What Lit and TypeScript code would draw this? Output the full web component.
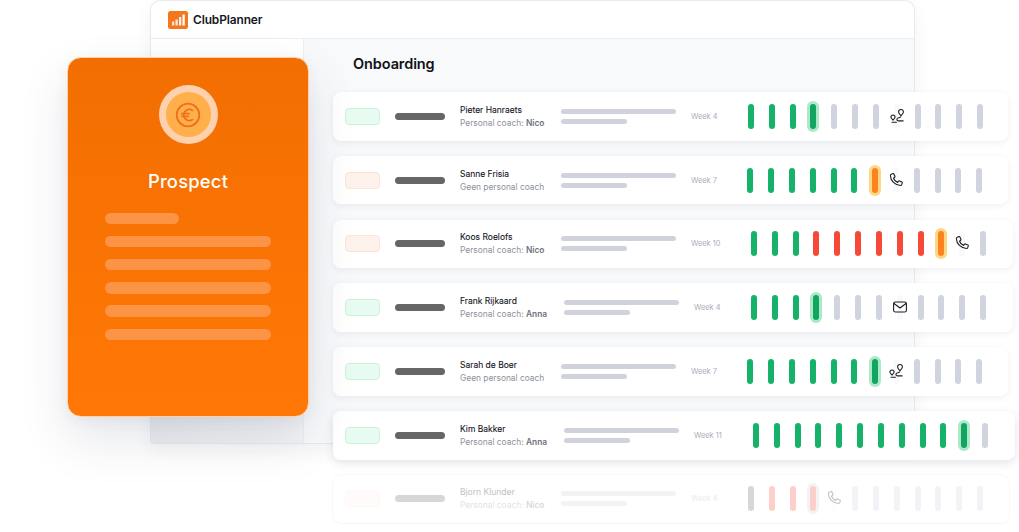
import { LitElement, html, css, svg } from "lit";
import { customElement } from "lit/decorators.js";

type Tone = "g" | "r" | "n" | "x" | "ag" | "ao" | "ar" | "route" | "phone" | "mail";
interface Row {
  name: string; sub: string; coach?: string; week: string; chip: "ok" | "warn";
  info: number; weekW: number; width: number; bars: Tone[]; faded?: boolean;
}
const rep = (t: Tone, n: number): Tone[] => Array(n).fill(t);
const rows: Row[] = [
  { name: "Pieter Hanraets", sub: "Personal coach: ", coach: "Nico", week: "Week 4", chip: "ok", info: 101, weekW: 57, width: 675,
    bars: [...rep("g", 3), "ag", ...rep("n", 3), "route", ...rep("n", 4)] },
  { name: "Sanne Frisia", sub: "Geen personal coach", week: "Week 7", chip: "warn", info: 101, weekW: 56.3, width: 675,
    bars: [...rep("g", 6), "ao", "phone", ...rep("n", 4)] },
  { name: "Koos Roelofs", sub: "Personal coach: ", coach: "Nico", week: "Week 10", chip: "warn", info: 101, weekW: 60, width: 680,
    bars: [...rep("g", 3), ...rep("r", 6), "ao", "phone", "n"] },
  { name: "Frank Rijkaard", sub: "Personal coach: ", coach: "Anna", week: "Week 4", chip: "ok", info: 104, weekW: 57, width: 680,
    bars: [...rep("g", 3), "ag", ...rep("n", 3), "mail", ...rep("n", 4)] },
  { name: "Sarah de Boer", sub: "Geen personal coach", week: "Week 7", chip: "ok", info: 101, weekW: 56.3, width: 675,
    bars: [...rep("g", 6), "ag", "route", ...rep("n", 4)] },
  { name: "Kim Bakker", sub: "Personal coach: ", coach: "Anna", week: "Week 11", chip: "ok", info: 104, weekW: 59, width: 682,
    bars: [...rep("g", 10), "ag", "n"] },
  { name: "Bjorn Klunder", sub: "Personal coach: ", coach: "Nico", week: "Week 4", chip: "warn", info: 101, weekW: 57, width: 676, faded: true,
    bars: ["x", "r", "r", "ar", "phone", ...rep("n", 7)] },
];

const icons: Record<string, unknown> = {
  route: svg`<path d="M12 1.500a2.400 2.400 0 0 1 2.400 2.400c0 1.500-1.500 2.700-2.400 3.700-.9-1-2.400-2.200-2.400-3.700A2.400 2.400 0 0 1 12 1.500Z"/><path d="M4 7a2.100 2.100 0 0 1 2.100 2.100c0 1.200-1.300 2.200-2.100 3-.8-.8-2.100-1.800-2.100-3A2.100 2.100 0 0 1 4 7Z"/><path d="M11.800 8.700c-.2.800-1 1-2 1.100-1.200.1-1.900.6-1.900 1.600s.7 1.500 1.800 1.500h4.400"/><path d="M3 14.200h4.400"/>`,
  phone: svg`<path d="M3.200 2.300 5 1.600c.4-.1.700 0 .900.400l1.100 2.400c.100.400 0 .700-.300.900L5.500 6.200c.700 1.800 2.200 3.400 4.100 4.200l.9-1.200c.2-.3.6-.4.9-.3l2.500 1.100c.4.200.5.500.4.900l-.6 1.800c-.2.500-.6.800-1.100.8C7 13.400 2.500 8.900 2.400 3.400c0-.5.300-.9.800-1.100Z"/>`,
  mail: svg`<rect x="1.600" y="3" width="12.800" height="10" rx="1.800"/><path d="M2 4.500 8 9l6-4.500"/>`,
};

@customElement("app-root")
export class AppRoot extends LitElement {
  static styles = css`
    :host { display: block; width: 1019px; height: 532px; position: relative; overflow: hidden; background: #fff;
      font-family: Inter, "Liberation Sans", sans-serif; }
    .window { position: absolute; left: 150px; top: 0; width: 765px; height: 444px; box-sizing: border-box;
      display: flex; flex-direction: column; border: 1px solid #e6e8ed; border-top-color: #e9ebef; border-radius: 10px 10px 4px 4px;
      background: #fff; box-shadow: 0 6px 18px rgba(30, 40, 70, .05); }
    .bar { height: 37px; flex: none; display: flex; align-items: center; gap: 5px; padding-left: 17px; border-bottom: 1px solid #eceef2; }
    .logo { width: 20px; height: 18px; }
    .brand { font-size: 11.900px; font-weight: 600; color: #14161c; letter-spacing: -.1px; }
    .body { flex: 1; display: flex; min-height: 0; }
    .side { width: 152px; flex: none; background: linear-gradient(100deg, #e6e8ec 0%, #f3f4f6 100%); border-radius: 0 0 0 4px; }
    .side-top { height: 330px; background: #fff; }
    .main { flex: 1; background: #f8f9fb; border-left: 1px solid #eceef2; padding: 15px 0 0 29px; min-width: 0; border-radius: 0 0 4px 0; }
    h1 { margin: 0 0 18px 20px; height: 20px; line-height: 20px; font-size: 14.500px; font-weight: 600; color: #101218; letter-spacing: -.1px; }
    .rows { display: flex; flex-direction: column; gap: 15.200px; }
    .row { height: 48.600px; flex: none; box-sizing: border-box; display: flex; align-items: center; padding-left: 12px; background: #fff;
      border-radius: 8px; box-shadow: 0 2px 7px rgba(40, 50, 80, .065); }
    .row.lead { box-shadow: 0 3px 10px rgba(40, 50, 80, .13); }
    .row.faded { box-shadow: 0 0 0 1px rgba(40, 50, 80, .022), 0 1px 3px rgba(40, 50, 80, .025); }
    .faded > * { opacity: .26; }
    .chip { width: 35px; height: 17px; box-sizing: border-box; flex: none; border-radius: 4px; border: 1px solid; }
    .chip.ok { background: #e8fbf1; border-color: #c9f3dc; }
    .chip.warn { background: #fef3ec; border-color: #fde4d5; }
    .pill { width: 50px; height: 7px; flex: none; border-radius: 4px; background: #666; margin: 0 15px; }
    .info { flex: none; min-width: 0; padding-top: 1px; }
    .name { font-size: 8.500px; line-height: 13px; font-weight: 400; color: #14161c; white-space: nowrap; -webkit-text-stroke: .1px #14161c; }
    .sub { font-size: 8.400px; line-height: 13px; color: #8d919d; white-space: nowrap; }
    .sub b { font-weight: 600; color: #6e7280; }
    .lines { width: 115px; flex: none; display: flex; flex-direction: column; gap: 5px; }
    .lines i { display: block; height: 5px; border-radius: 3px; background: #d0d3dc; }
    .lines i + i { width: 66px; }
    .week { flex: none; box-sizing: border-box; padding-left: 15px; font-size: 7.400px; color: #a9aeb9; white-space: nowrap; }
    .bars { display: flex; gap: 14.820px; align-items: center; }
    .b { width: 6px; height: 25px; border-radius: 3px; flex: none; position: relative; }
    .b.g { background: #17b26a; }
    .b.r { background: #f44a37; }
    .b.n { background: #d0d4de; }
    .b.x { background: #666; }
    .b.ag { background: #12a561; box-shadow: 0 0 0 3px #ace9c8; }
    .b.ao { background: #fb8320; box-shadow: 0 0 0 3px #ffd784; }
    .b.ar { background: #f44a37; box-shadow: 0 0 0 3px #d0d4de; }
    .b.ic { background: #f8f9fb; }
    .ic svg { position: absolute; left: -5px; top: 4px; width: 16px; height: 16px; fill: none; stroke: #1a1c22; stroke-width: 1.100; stroke-linecap: round; stroke-linejoin: round; }
    .card { position: absolute; left: 67px; top: 57px; width: 242px; height: 360px; box-sizing: border-box; padding-top: 27px;
      border: 1.500px solid #ffcfa8; border-radius: 14px; background: linear-gradient(180deg, #f36e01 0%, #ff7807 100%);
      display: flex; flex-direction: column; align-items: center;
      box-shadow: 0 22px 50px rgba(40, 50, 80, .12), 0 4px 14px rgba(40, 50, 80, .05); }
    .coin { width: 59px; height: 59px; border-radius: 50%; box-sizing: border-box; border: 7.500px solid #fdd1ad; background: #ffb04a;
      display: flex; align-items: center; justify-content: center; flex: none; }
    .coin svg { width: 26px; height: 26px; fill: none; stroke: #ef6f1c; stroke-width: 1.800; stroke-linecap: round; }
    .title { margin-top: 24px; height: 26px; line-height: 26px; font-size: 18.400px; font-weight: 500; color: #fff; letter-spacing: .2px; }
    .plist { margin-top: 18.500px; width: 166px; display: flex; flex-direction: column; gap: 11.850px; }
    .plist i { display: block; height: 11.400px; border-radius: 6px; background: #fc9345; }
    .plist i:first-child { width: 74px; }
  `;

  private renderRow(r: Row, i: number) {
    const rowW = `width:${r.width}px`;
    return html`<div class="row ${r.faded ? "faded" : ""} ${i === 5 ? "lead" : ""}" style=${rowW}>
      <div class="chip ${r.chip}"></div>
      <div class="pill"></div>
      <div class="info" style="width:${r.info}px">
        <div class="name">${r.name}</div>
        <div class="sub">${r.sub}${r.coach ? html`<b>${r.coach}</b>` : ""}</div>
      </div>
      <div class="lines"><i></i><i></i></div>
      <div class="week" style="width:${r.weekW + 15}px">${r.week}</div>
      <div class="bars">
        ${r.bars.map((t) => icons[t]
          ? html`<div class="b ic"><svg viewBox="0 0 16 16">${icons[t]}</svg></div>`
          : html`<div class="b ${t}"></div>`)}
      </div>
    </div>`;
  }

  render() {
    return html`
      <div class="window">
        <div class="bar">
          <svg class="logo" viewBox="0 0 20 18">
            <rect width="20" height="18" rx="2.500" fill="#f4761d"/>
            <rect x="4" y="10.500" width="2.300" height="4" fill="#fff" opacity=".8"/>
            <rect x="7.500" y="8.500" width="2.300" height="6" fill="#fff" opacity=".85"/>
            <rect x="11" y="6" width="2.300" height="8.500" fill="#fff" opacity=".9"/>
            <rect x="14.500" y="3.500" width="2.300" height="11" fill="#fff"/>
          </svg>
          <span class="brand">ClubPlanner</span>
        </div>
        <div class="body">
          <div class="side"><div class="side-top"></div></div>
          <div class="main">
            <h1>Onboarding</h1>
            <div class="rows">${rows.map((r, i) => this.renderRow(r, i))}</div>
          </div>
        </div>
      </div>
      <div class="card">
        <div class="coin">
          <svg viewBox="0 0 26 26">
            <circle cx="13" cy="13" r="11.300"/>
            <path d="M17.500 8.400a5.600 5.600 0 1 0 0 9.200M6.800 11.600h7.400M6.800 14.400h6.400"/>
          </svg>
        </div>
        <div class="title">Prospect</div>
        <div class="plist"><i></i><i></i><i></i><i></i><i></i><i></i></div>
      </div>
    `;
  }
}
